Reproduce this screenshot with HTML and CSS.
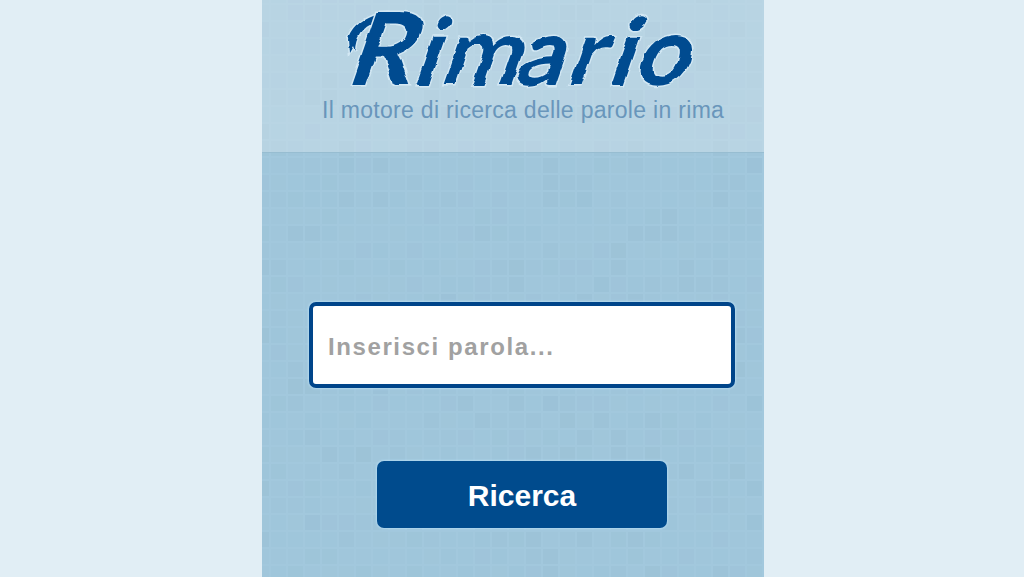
FILE: index.html
```
<!DOCTYPE html>
<html lang="it">
<head>
  <meta charset="utf-8">
  <title>Rimario</title>
  <link rel="stylesheet" href="styles.css">
</head>
<body>

  <div class="page">
    <svg class="tiles" id="tiles" width="502" height="577"></svg>

    <header class="header">
      <svg class="logo" width="502" height="92" viewBox="-80 0 502 92">
        <defs>
          <filter id="brush" x="-5%" y="-10%" width="110%" height="120%">
            <feTurbulence type="fractalNoise" baseFrequency="0.04 0.07" numOctaves="2" seed="9" result="noise" />
            <feDisplacementMap in="SourceGraphic" in2="noise" scale="6" xChannelSelector="R" yChannelSelector="G" />
          </filter>
        </defs>
        <g filter="url(#brush)">
          <path class="logo-swash" d="M44 12C29 13 11 24 6 39L7 53L11 46L13 51C13 38 20 27 34 22Z" />
          <text class="logo-text" transform="translate(0 85) skewX(-19)" x="1 69 96 170 222 263 289" y="0"><tspan class="logo-cap" textLength="66" lengthAdjust="spacingAndGlyphs">R</tspan>imario</text>
        </g>
      </svg>
      <p class="tagline">Il motore di ricerca delle parole in rima</p>
    </header>

    <form class="search" onsubmit="return false">
      <input class="search-input" type="text" placeholder="Inserisci parola...">
      <button class="search-button">Ricerca</button>
    </form>
  </div>

  <script>
    // Mosaic background, slightly darker tiles at random
    const tiles = document.getElementById("tiles");
    let seed = 7;

    function random() {
      seed = (seed * 16807) % 2147483647;
      return seed / 2147483647;
    }

    for (let y = -12; y < 577; y += 17) {
      for (let x = -8; x < 502; x += 17) {
        const rect = document.createElementNS("http://www.w3.org/2000/svg", "rect");
        rect.setAttribute("x", x);
        rect.setAttribute("y", y);
        rect.setAttribute("width", 15);
        rect.setAttribute("height", 15);
        rect.setAttribute("opacity", (random() * random() * 0.05 + 0.015).toFixed(3));
        tiles.appendChild(rect);
      }
    }
  </script>

</body>
</html>
```
FILE: styles.css
```
body {
  margin: 0;
  background: #e1eef5;
  font-family: "Liberation Sans", Arial, sans-serif;
}

.page {
  position: relative;
  width: 502px;
  height: 577px;
  margin-left: 262px;
  background: #a2c8dd;
}

.tiles {
  position: absolute;
  top: 0;
  left: 0;
  fill: #4a7488;
}

.header {
  position: relative;
  height: 152px;
  background: rgba(220, 233, 239, 0.4);
  border-bottom: 1px solid #97bdd1;
}

.logo {
  display: block;
  overflow: visible;
}

.logo-text,
.logo-swash {
  fill: #004b90;
  stroke: #d3e8f4;
  stroke-width: 3px;
  paint-order: stroke;
}

.logo-text {
  font-family: Lato, sans-serif;
  font-size: 94px;
  font-weight: 700;
}

.logo-cap {
  font-size: 101px;
}

.tagline {
  margin: 5px 0 0 60px;
  font-size: 23px;
  line-height: 26px;
  letter-spacing: 0.3px;
  white-space: nowrap;
  color: #6996bb;
}

.search {
  position: relative;
  display: flex;
  flex-direction: column;
  width: 426px;
  margin: 149px 0 0 47px;
}

.search-input {
  box-sizing: border-box;
  height: 86px;
  padding: 3px 15px 0;
  border: 4px solid #00458a;
  border-radius: 7px;
  background: #fff;
  box-shadow: 0 0 2px 1px #b3d9ee;
  font: bold 24px "Liberation Sans", Arial, sans-serif;
  letter-spacing: 1.6px;
}

.search-input::placeholder {
  color: #a1a1a1;
}

.search-button {
  width: 290px;
  height: 67px;
  margin: 73px 0 0 68px;
  padding: 2px 0 0;
  border: none;
  border-radius: 7px;
  background: #004b8d;
  box-shadow: 0 0 2px 1px #b0d8f0;
  color: #fff;
  font: bold 30px "Liberation Sans", Arial, sans-serif;
}
```
